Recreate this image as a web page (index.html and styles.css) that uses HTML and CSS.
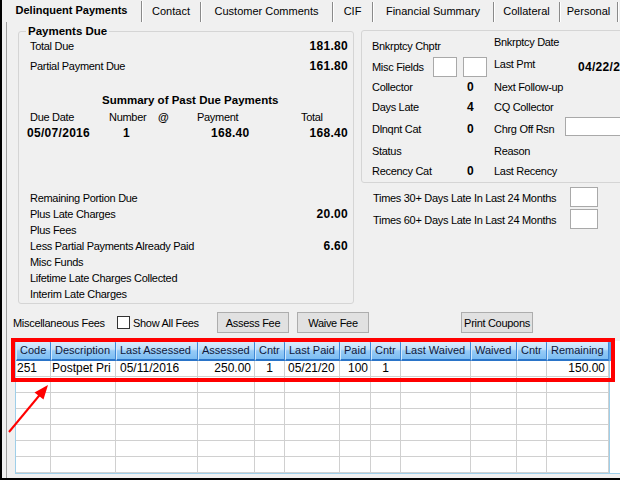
FILE: index.html
```html
<!DOCTYPE html>
<html lang="en">
<head>
<meta charset="utf-8">
<title>Delinquent Payments</title>
<link rel="stylesheet" href="styles.css">
</head>
<body>
<div class="window">
  <div class="tabs">
    <div class="tab active t1">Delinquent Payments</div>
    <div class="tab t2">Contact</div>
    <div class="tab t3">Customer Comments</div>
    <div class="tab t4">CIF</div>
    <div class="tab t5">Financial Summary</div>
    <div class="tab t6">Collateral</div>
    <div class="tab t7">Personal</div>
  </div>
  <div class="page">
    <div class="top">
      <div class="group pay-group">
        <div class="legend">Payments Due</div>
        <div class="kv"><span>Total Due</span><b class="num">181.80</b></div>
        <div class="kv second"><span>Partial Payment Due</span><b class="num">161.80</b></div>
        <div class="summary-title">Summary of Past Due Payments</div>
        <div class="summary">
          <span>Due Date</span><span>Number</span><b class="at">@</b><span>Payment</span><span class="tot-h">Total</span>
          <b class="num dd">05/07/2016</b><b class="num cnt">1</b><span></span><b class="num pay">168.40</b><b class="num tot">168.40</b>
        </div>
        <div class="totals">
          <div class="kv"><span>Remaining Portion Due</span></div>
          <div class="kv"><span>Plus Late Charges</span><b class="num">20.00</b></div>
          <div class="kv"><span>Plus Fees</span></div>
          <div class="kv"><span>Less Partial Payments Already Paid</span><b class="num">6.60</b></div>
          <div class="kv"><span>Misc Funds</span></div>
          <div class="kv"><span>Lifetime Late Charges Collected</span></div>
          <div class="kv"><span>Interim Late Charges</span></div>
        </div>
      </div>
      <div class="right-col">
        <div class="group status-group">
          <div class="srow h21"><span class="lbl">Bnkrptcy Chptr</span><span class="l2 up15">Bnkrptcy Date</span></div>
          <div class="srow h22"><span class="c1">Misc Fields</span><span class="box misc misc1"></span><span class="box misc misc2"></span><span class="l2 up16">Last Pmt</span><b class="num v2">04/22/2016</b></div>
          <div class="srow h18"><span class="lbl">Collector</span><b class="num v1">0</b><span class="l2">Next Follow-up</span></div>
          <div class="srow h21"><span class="lbl">Days Late</span><b class="num v1">4</b><span class="l2">CQ Collector</span></div>
          <div class="srow h23"><span class="lbl">Dlnqnt Cat</span><b class="num v1">0</b><span class="l2">Chrg Off Rsn</span><span class="box rsn"></span></div>
          <div class="srow h21"><span class="lbl">Status</span><span class="l2">Reason</span></div>
          <div class="srow h19"><span class="lbl">Recency Cat</span><b class="num v1">0</b><span class="l2">Last Recency</span></div>
        </div>
        <div class="times">
          <span>Times 30+ Days Late In Last 24 Months</span><span class="box tbox"></span>
          <span>Times 60+ Days Late In Last 24 Months</span><span class="box tbox"></span>
        </div>
      </div>
    </div>
    <div class="fees">
      <span class="fees-lbl">Miscellaneous Fees</span>
      <span class="check"></span>
      <span class="check-lbl">Show All Fees</span>
      <button class="btn" type="button">Assess Fee</button>
      <button class="btn waive" type="button">Waive Fee</button>
      <button class="btn print" type="button">Print Coupons</button>
    </div>
    <div class="dgv">
      <div class="h">Code</div><div class="h">Description</div><div class="h">Last Assessed</div><div class="h">Assessed</div><div class="h">Cntr</div><div class="h">Last Paid</div><div class="h">Paid</div><div class="h">Cntr</div><div class="h">Last Waived</div><div class="h">Waived</div><div class="h">Cntr</div><div class="h">Remaining</div><div class="hf"></div>

      <div class="d p1">251</div><div class="d p1">Postpet Pri</div><div class="d p4">05/11/2016</div><div class="d r">250.00</div><div class="d c">1</div><div class="d p3">05/21/20</div><div class="d r r2">100</div><div class="d c">1</div><div class="d"></div><div class="d"></div><div class="d"></div><div class="d r">150.00</div><div class="f"></div>

      <div class="d"></div><div class="d"></div><div class="d"></div><div class="d"></div><div class="d"></div><div class="d"></div><div class="d"></div><div class="d"></div><div class="d"></div><div class="d"></div><div class="d"></div><div class="d"></div><div class="f"></div>
      <div class="d"></div><div class="d"></div><div class="d"></div><div class="d"></div><div class="d"></div><div class="d"></div><div class="d"></div><div class="d"></div><div class="d"></div><div class="d"></div><div class="d"></div><div class="d"></div><div class="f"></div>
      <div class="d"></div><div class="d"></div><div class="d"></div><div class="d"></div><div class="d"></div><div class="d"></div><div class="d"></div><div class="d"></div><div class="d"></div><div class="d"></div><div class="d"></div><div class="d"></div><div class="f"></div>
      <div class="d"></div><div class="d"></div><div class="d"></div><div class="d"></div><div class="d"></div><div class="d"></div><div class="d"></div><div class="d"></div><div class="d"></div><div class="d"></div><div class="d"></div><div class="d"></div><div class="f"></div>
      <div class="d"></div><div class="d"></div><div class="d"></div><div class="d"></div><div class="d"></div><div class="d"></div><div class="d"></div><div class="d"></div><div class="d"></div><div class="d"></div><div class="d"></div><div class="d"></div><div class="f"></div>
      <div class="d"></div><div class="d"></div><div class="d"></div><div class="d"></div><div class="d"></div><div class="d"></div><div class="d"></div><div class="d"></div><div class="d"></div><div class="d"></div><div class="d"></div><div class="d"></div><div class="f"></div>

      <div class="highlight"></div>
    </div>
  </div>
</div>
<svg class="arrow" width="620" height="480" viewBox="0 0 620 480" aria-hidden="true">
  <line x1="9" y1="432" x2="43" y2="391" stroke="#ff0000" stroke-width="2"/>
  <polygon points="48,385 34.5,392.5 43.5,399.5" fill="#ff0000"/>
</svg>
</body>
</html>
```

FILE: styles.css
```css
html, body {
  margin: 0;
  padding: 0;
}
body {
  position: relative;
  width: 620px;
  height: 480px;
  overflow: hidden;
  font-family: "Liberation Sans", Arial, sans-serif;
  font-size: 11px;
  color: #000;
  background: #f0f0f0;
}
.window {
  width: 620px;
  height: 480px;
  box-sizing: border-box;
  border-left: 2px solid #000;
  border-bottom: 2px solid #000;
  background: #f0f0f0;
  overflow: hidden;
}

/* tabs */
.tabs {
  display: flex;
  height: 22px;
}
.tab {
  flex: none;
  box-sizing: border-box;
  height: 20px;
  margin-top: 2px;
  line-height: 19px;
  text-align: center;
  white-space: nowrap;
  border-right: 1px solid #8a8a8a;
  box-shadow: 1px 0 0 #ffffff;
}
.tab.active {
  height: 21px;
  margin-top: 1px;
  line-height: 19px;
  font-weight: bold;
}
.t1 { width: 140px; }
.t2 { width: 59px; }
.t3 { width: 132px; }
.t4 { width: 40px; }
.t5 { width: 121px; }
.t6 { width: 66px; }
.t7 { width: 58px; }

/* tab page */
.page {
  width: 700px;
  height: 456px;
  margin-left: 4px;
  border-left: 1px solid #a0a0a0;
  letter-spacing: -0.3px;
}
.top {
  display: flex;
  align-items: flex-start;
}
.group {
  box-sizing: border-box;
  border: 1px solid #d5d5d5;
  border-radius: 3px;
}
.pay-group {
  width: 336px;
  margin: 9px 0 0 11px;
  padding: 0 5px 1px 11px;
}
.legend {
  width: max-content;
  margin: -8px 0 0 -4px;
  padding: 0 2px;
  background: #f0f0f0;
  font-weight: bold;
  font-size: 11.5px;
  line-height: 14px;
  letter-spacing: 0;
}
.kv {
  display: flex;
  justify-content: space-between;
  height: 16px;
  line-height: 16px;
}
.kv.second {
  margin-top: 4px;
}
.num {
  font-weight: bold;
  font-size: 12px;
  letter-spacing: 0.3px;
}
.summary-title {
  margin: 18px 0 0 72px;
  font-weight: bold;
  font-size: 11.5px;
  line-height: 16px;
  letter-spacing: 0;
}
.summary {
  display: grid;
  grid-template-columns: 79px 49px 39px 83px 1fr;
  grid-auto-rows: 16px;
  line-height: 16px;
  margin-top: 1px;
}
.at {
  font-weight: bold;
}
.tot-h { padding-left: 21px; }
.dd { margin-left: -3px; }
.cnt { padding-left: 14px; }
.pay { padding-left: 14px; }
.tot { text-align: right; }
.totals {
  margin-top: 49px;
}

/* right column */
.right-col {
  margin-left: 7px;
}
.status-group {
  width: 290px;
  margin-top: 8px;
  padding: 4px 0 2px 10px;
}
.srow {
  display: grid;
  grid-template-columns: 61px 29px 32px 84px 1fr;
  align-items: center;
  white-space: nowrap;
}
.h18 { height: 18px; }
.h19 { height: 19px; }
.h21 { height: 21px; }
.h22 { height: 22px; }
.h23 { height: 23px; }
.lbl { grid-column: 1 / 3; }
.c1 { grid-column: 1; }
.v1 { grid-column: 3; padding-left: 5px; }
.l2 { grid-column: 4; }
.v2 { grid-column: 5; }
.up15 { align-self: start; line-height: 15px; }
.up16 { align-self: start; line-height: 16px; }
.box {
  display: block;
  box-sizing: border-box;
  background: #fff;
  border: 1px solid #a9a9a9;
}
.misc { width: 24px; height: 20px; }
.misc1 { grid-column: 2; }
.misc2 { grid-column: 3; margin-left: 1px; }
.rsn {
  grid-column: 5;
  align-self: start;
  margin-left: -13px;
  width: 80px;
  height: 19px;
}
.times {
  display: grid;
  grid-template-columns: 197px 28px;
  grid-auto-rows: 21px;
  row-gap: 1px;
  align-items: center;
  margin-top: 4px;
  padding-left: 12px;
  white-space: nowrap;
}
.tbox {
  align-self: start;
  width: 28px;
  height: 20px;
}

/* fees bar */
.fees {
  display: flex;
  align-items: center;
  height: 21px;
  margin: 8px 0 0 6px;
  white-space: nowrap;
}
.fees-lbl { width: 104px; }
.check {
  box-sizing: border-box;
  width: 13px;
  height: 13px;
  border: 1px solid #333;
  background: #fff;
}
.check-lbl {
  width: 84px;
  margin-left: 3px;
}
.btn {
  box-sizing: border-box;
  width: 72px;
  height: 21px;
  margin: 0;
  padding: 0;
  border: 1px solid #adadad;
  background: #e1e1e1;
  font-family: inherit;
  font-size: 11px;
  letter-spacing: -0.3px;
  color: #000;
}
.btn.waive { margin-left: 8px; }
.btn.print { margin-left: 92px; }

/* data grid */
.dgv {
  position: relative;
  display: grid;
  grid-template-columns: 35px 65px 82px 57px 30px 55px 31px 30px 70px 46px 30px 62px 1fr;
  grid-template-rows: 20px repeat(7, 16px);
  width: 640px;
  margin: 8px 0 0 8px;
  border-left: 1px solid #9fcfe9;
  border-bottom: 1px solid #9fcfe9;
  background: #fff;
  letter-spacing: 0;
}
.h {
  box-sizing: border-box;
  height: 20px;
  padding-left: 3px;
  line-height: 18px;
  font-size: 11px;
  color: #10183a;
  white-space: nowrap;
  overflow: hidden;
  background: linear-gradient(#dcedfd 0%, #c2e0fb 45%, #97cbf6 55%, #7bbcf2 100%);
  border-left: 1px solid #d4e9fc;
  border-right: 1px solid #3f88d6;
  border-bottom: 2px solid #2a74c8;
  border-radius: 2px 2px 0 0;
}
.hf {
  border-left: 2px solid #5aa3e6;
  background: #fff;
}
.d {
  box-sizing: border-box;
  height: 16px;
  padding: 0 2px;
  line-height: 15px;
  font-size: 12px;
  white-space: nowrap;
  overflow: hidden;
  border-right: 1px solid #d0d0d0;
  border-bottom: 1px solid #d0d0d0;
}
.f {
  border-left: 1px solid #9fcfe9;
  margin-left: 0;
}
.p1 { padding-left: 1px; }
.p3 { padding-left: 3px; }
.p4 { padding-left: 4px; }
.r { text-align: right; padding-right: 3px; }
.r.r2 { padding-right: 2px; }
.c { text-align: center; }
.highlight {
  position: absolute;
  left: -5px;
  top: -3px;
  width: 604px;
  height: 44px;
  box-sizing: border-box;
  border: 4px solid #ff0000;
  pointer-events: none;
}

/* annotation arrow */
.arrow {
  position: absolute;
  left: 0;
  top: 0;
  pointer-events: none;
}
```
